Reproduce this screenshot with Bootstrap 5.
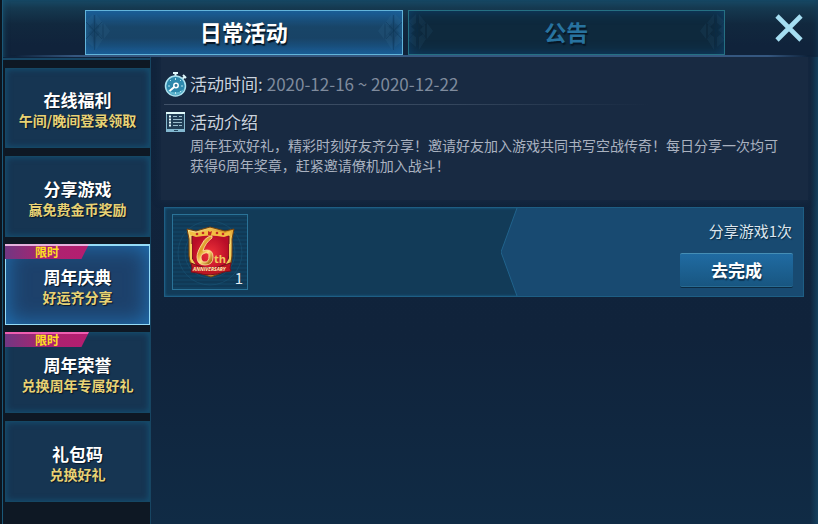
<!DOCTYPE html>
<html lang="zh-CN">
<head>
<meta charset="utf-8">
<meta name="viewport" content="width=device-width, initial-scale=1">
<title>日常活动</title>
<link href="https://cdn.jsdelivr.net/npm/bootstrap@5.3.0/dist/css/bootstrap.min.css" rel="stylesheet">
<style>
body { font-family: "Noto Sans CJK SC", sans-serif; background: #0b151f; color: #fff; line-height: 20px; }
.game-window { margin-left: 2px; border-left: 1px solid #1b5878; background: #10233b; }
.top-bar { height: 57px; padding: 10px 15px 2px 82px; background: linear-gradient(#174965 0, #153950 8px, #11283e 24px, #10233b 45px); box-shadow: inset 6px 0 6px -6px #195370, inset -6px 0 6px -6px #153d5a; position: relative; }
.top-bar::after { content: ""; position: absolute; left: 12px; right: 10px; bottom: 0; height: 2px; background: linear-gradient(90deg, transparent, #355780 60px calc(100% - 40px), transparent); }
.main-tab { height: 45px; border: 1px solid #257083; border-radius: 0; background: #0e293d; color: #28739f; font-size: 22px; font-weight: 700; line-height: 41px; padding: 0 25px; text-shadow: 1px 2px 1px #071625; box-shadow: inset 0 0 12px #0e416c; }
.main-tab.active { border-color: #62b4da; background: linear-gradient(#1b5c94, #184568 16px, #184366 27px, #1a5a91); color: #fff; box-shadow: inset 0 0 10px #1a609a; }
.tab-ornament { width: 25px; height: 43px; }
.close-btn { margin-left: 50px; width: 28px; height: 36px; }
.side-nav { width: 148px; padding: 11px 0 22px 2px; gap: 8px; background: linear-gradient(#10233b 1px, #174766 1px 3px, #0e1824 3px); border-right: 1px solid #174562; }
.side-item { height: 80px; border: 1px solid #154764; border-radius: 0; padding: 3px 0 0; background: #163552; color: #fff; box-shadow: inset 0 0 6px #155276; text-shadow: 1px 1px 1px #071525; position: relative; }
.side-item + .side-item { height: 81px; }
.side-item + .side-item ~ .side-item:not(:last-child) { margin-top: -1px; }
.side-item.active { border: 1px solid #95dcf7; border-top-width: 2px; background: #1d416b; box-shadow: inset 0 0 22px #2175b9; }
.item-title { font-size: 17px; font-weight: 700; line-height: 21px; }
.item-note { font-size: 14px; font-weight: 700; line-height: 20px; color: #e8d274; }
.limited { position: absolute; left: -1px; top: -1px; width: 84px; height: 15px; background: linear-gradient(90deg, #713783, #a9246f 45%, #b51d70); border-top: 2px solid #ef5eb0; clip-path: polygon(0 0, 100% 0, 91% 100%, 0 100%); color: #ffe01f; font-size: 12px; font-weight: 700; line-height: 12px; text-shadow: none; }
.side-item.active .limited { top: -2px; border-top-color: #e6b2dc; }
.content-panel { padding: 0 10px; background: linear-gradient(90deg, #14365000 calc(100% - 8px), #15405d), linear-gradient(#11243c, #10233b 60%, #102b45); min-height: calc(100vh - 57px); }
.info-panel { padding: 14px 20px 0 3px; min-height: 143px; background: #182a42; box-shadow: 0 0 6px 1px #182a42; }
.info-label { font-size: 17px; line-height: 26px; color: #c9d2de; text-shadow: 1px 1px 1px #0c192a; }
.info-date { font-size: 17px; line-height: 26px; color: #7f8b9d; }
.info-icon { width: 24px; height: 26px; margin-right: 2px; }
.fade-rule { height: 1px; margin: 7px 0 4px; background: linear-gradient(90deg, #405168, #35475e 45%, transparent 78%); }
.info-copy { padding-left: 26px; font-size: 14px; line-height: 20px; color: #aab2c0; }
.task-panel { margin: 7px 4px 0 3px; height: 90px; border: 1px solid #1e5e84; background: #123b58; position: relative; box-shadow: inset 0 0 3px #1c628b; }
.task-cut { position: absolute; top: 0; right: 0; width: 302px; height: 100%; }
.reward { width: 76px; height: 76px; margin: 6px 0 0 7px; border: 1px solid #2a7297; background: repeating-linear-gradient(#11405f 0 2px, #103956 2px 4px); position: relative; }
.reward-count { position: absolute; right: 4px; bottom: 2px; font-size: 15px; line-height: 18px; color: #e7edf3; }
.task-action { padding: 13px 10px 0 0; position: relative; }
.task-text { font-size: 15px; line-height: 20px; color: #dce6ee; text-shadow: 1px 1px 1px #0c2a43; padding-right: 1px; }
.go-btn { width: 113px; height: 34px; margin-top: 12px; padding: 0; border: 0; border-top: 1px solid #458eb5; border-bottom: 1px solid #286b92; border-radius: 2px; background: linear-gradient(#206ba2, #185681); color: #fff; font-size: 17px; font-weight: 700; line-height: 32px; text-shadow: 1px 2px 1px #0d3554; box-shadow: 0 1px 0 #0c2b43; }
.game-window button:focus-visible { outline: 2px solid #9edff5; }
</style>
<script src="https://cdn.jsdelivr.net/npm/bootstrap@5.3.0/dist/js/bootstrap.bundle.min.js"></script>
</head>
<body>
<svg class="d-none" aria-hidden="true">
  <symbol id="lattice" viewBox="0 0 25 43">
    <g fill="#3c7ca1" opacity=".15"><path d="M7 3 0 10v7l7-5zM10 3v9l4 4 3-4zM6 19 0 14v10zM11 19l5-6v12zM18 12l6 8-6 8zM7 26 0 21v9l7 6zM10 26v13l7-11-3-5z"/></g>
    <path d="M0 11 16 28M0 28 16 11M8.500 4v35" fill="none" stroke="#092d4d" opacity=".35"/>
  </symbol>
</svg>
<div class="game-window min-vh-100">
  <header class="top-bar d-flex align-items-start">
    <nav class="d-flex flex-grow-1" style="gap:5px" aria-label="活动分类">
      <button class="main-tab active btn d-flex flex-fill justify-content-center position-relative w-50" type="button" aria-current="page">
        <svg class="tab-ornament position-absolute start-0 top-0"><use href="#lattice"/></svg>日常活动
        <svg class="tab-ornament position-absolute end-0 top-0" viewBox="0 0 25 43"><g transform="translate(25 0) scale(-1 1)"><use href="#lattice" width="25" height="43"/></g></svg>
      </button>
      <button class="main-tab btn d-flex flex-fill justify-content-center position-relative w-50" type="button">
        <svg class="tab-ornament position-absolute start-0 top-0 opacity-75"><use href="#lattice"/></svg>公告
        <svg class="tab-ornament position-absolute end-0 top-0 opacity-75" viewBox="0 0 25 43"><g transform="translate(25 0) scale(-1 1)"><use href="#lattice" width="25" height="43"/></g></svg>
      </button>
    </nav>
    <button class="close-btn btn border-0 p-0 d-flex align-items-center justify-content-center" type="button" aria-label="关闭">
      <svg width="28" height="28" viewBox="0 0 28 28"><path d="m2 2 24 24M26 2 2 26" fill="none" stroke="#a5def2" stroke-width="4.600"/></svg>
    </button>
  </header>
  <div class="d-flex">
    <nav class="side-nav d-flex flex-column flex-shrink-0" aria-label="活动列表">
      <button class="side-item btn d-flex flex-column align-items-center justify-content-center" type="button"><span class="item-title">在线福利</span><span class="item-note">午间/晚间登录领取</span></button>
      <button class="side-item btn d-flex flex-column align-items-center justify-content-center" type="button"><span class="item-title">分享游戏</span><span class="item-note">赢免费金币奖励</span></button>
      <button class="side-item active btn d-flex flex-column align-items-center justify-content-center" type="button" aria-current="true"><span class="limited">限时</span><span class="item-title">周年庆典</span><span class="item-note">好运齐分享</span></button>
      <button class="side-item btn d-flex flex-column align-items-center justify-content-center" type="button"><span class="limited">限时</span><span class="item-title">周年荣誉</span><span class="item-note">兑换周年专属好礼</span></button>
      <button class="side-item btn d-flex flex-column align-items-center justify-content-center" type="button"><span class="item-title">礼包码</span><span class="item-note">兑换好礼</span></button>
    </nav>
    <main class="content-panel flex-grow-1">
      <section class="info-panel">
        <div class="d-flex">
          <svg class="info-icon" viewBox="0 0 24 26" aria-hidden="true">
            <path d="M9 2h5M11.500 2v4M19 4l3 3M20.500 6 17 9" stroke="#dff7fb" stroke-width="2"/>
            <circle cx="11.500" cy="15" r="10" fill="#2d88ac" stroke="#abe1ef" stroke-width="1.500"/>
            <path d="M3 18q8 7 17 0a9 9 0 0 1-17 0" fill="#60b5cd"/>
            <path d="M11.500 7v2M4 15h2M17 15h2M11.500 21v2M6 9l1 1M17 9l-1 1M16 20l1 1" stroke="#b7e5ef"/>
            <path d="m11.500 15-6 5" stroke="#fff" stroke-width="2"/><circle cx="12" cy="14.500" r="2.200" fill="#2e7899" stroke="#fff" stroke-width="1.500"/>
          </svg>
          <span class="info-label">活动时间:</span><span class="info-date ms-1">2020-12-16 ~ 2020-12-22</span>
        </div>
        <div class="fade-rule"></div>
        <div class="d-flex">
          <svg class="info-icon" viewBox="0 0 24 26" aria-hidden="true">
            <path d="M2.500 4.500h18v16h-18z" fill="#213e56" stroke="#86b8cc"/><path d="M2 4h19" stroke="#e0fafa" stroke-width="2"/>
            <path d="M2 20h19v3H2z" fill="#83b8d0"/><path d="M10 21.500h4" stroke="#24485f"/>
            <path d="M5 7.500h2M5 10.500h2M5 13.500h2M5 16.500h2" stroke="#e5faff" stroke-width="2"/>
            <path d="M9 7.500h4M15 7.500h3M9 10.500h9M9 13.500h9M9 16.500h5M15 16.500h3" stroke="#9abccc"/>
          </svg>
          <h1 class="info-label fw-normal mb-0">活动介绍</h1>
        </div>
        <p class="info-copy mb-0">周年狂欢好礼，精彩时刻好友齐分享！邀请好友加入游戏共同书写空战传奇！每日分享一次均可获得6周年奖章，赶紧邀请僚机加入战斗！</p>
      </section>
      <section class="task-panel d-flex justify-content-between">
        <svg class="task-cut" viewBox="0 0 302 88" preserveAspectRatio="none" aria-hidden="true"><path d="M16 0h286v88H16L0 44z" fill="#184a71"/><path d="M16 0 0 44l16 44" fill="none" stroke="#21638c"/></svg>
        <div class="reward">
          <svg width="74" height="74" viewBox="0 0 74 74" role="img" aria-label="6th Anniversary 奖章">
            <defs><linearGradient id="gold" x2=".7" y2="1"><stop stop-color="#fff0a0"/><stop offset=".45" stop-color="#dc9823"/><stop offset=".7" stop-color="#ffe680"/><stop offset="1" stop-color="#b06a16"/></linearGradient><radialGradient id="red"><stop stop-color="#f03239"/><stop offset="1" stop-color="#b80d27"/></radialGradient></defs>
            <g fill="none" stroke="#1b587a" opacity=".5"><circle cx="37" cy="38" r="32"/><circle cx="37" cy="38" r="25"/></g>
            <path d="m14 14 9 2 14-4 15 4 9-2-2 10v17q0 13-11 17l-10 4-11-4Q17 54 16 41V24z" fill="url(#gold)" stroke="#76410d"/>
            <path d="M19 21q18-4 37 0v18q-1 14-9 16l-9 4-10-4q-9-4-9-16z" fill="url(#red)" stroke="#6e131c"/>
            <path d="m16 16 7 2 14-3 15 3 6-2-1 4-6 2q-14-3-28 0l-6-2z" fill="#f2bf42"/>
            <g fill="#c32925"><circle cx="24" cy="19" r="1.300"/><circle cx="30" cy="18" r="1.300"/><path d="m35 16 2 1 2-1-1 4h-3z"/><circle cx="44" cy="18" r="1.300"/><circle cx="50" cy="19" r="1.300"/></g>
            <path d="M18 29v15l5 8M57 29v15l-5 8" fill="none" stroke="#f2ce5b" stroke-width="2"/>
            <path d="m18 48 5 2q15 6 28 0l7-2-1 5 1 3-7 1q-13 5-27 1l-6-1 1-4z" fill="#bd1723" stroke="#75111b"/>
            <path d="M39 21q-6 0-10 8-5 8-5 13 0 8 8 8t8-8q0-7-6-7-2 0-4 1 2-8 9-13zM32 38q4-1 4 3 0 6-4 6t-4-5q0-3 4-4z" fill="url(#gold)" fill-rule="evenodd" stroke="#ffe9a0" stroke-width=".8"/>
            <text x="41" y="48" font-family="Open Sans, sans-serif" font-weight="700" font-size="11" fill="#efc75c">th</text><text x="20" y="56" font-family="Open Sans, sans-serif" font-weight="700" font-style="italic" font-size="5" fill="#fff1b4">ANNIVERSARY</text>
          </svg>
          <span class="reward-count">1</span>
        </div>
        <div class="task-action d-flex flex-column align-items-end"><span class="task-text">分享游戏1次</span><button class="go-btn btn" type="button">去完成</button></div>
      </section>
    </main>
  </div>
</div>
</body>
</html>
